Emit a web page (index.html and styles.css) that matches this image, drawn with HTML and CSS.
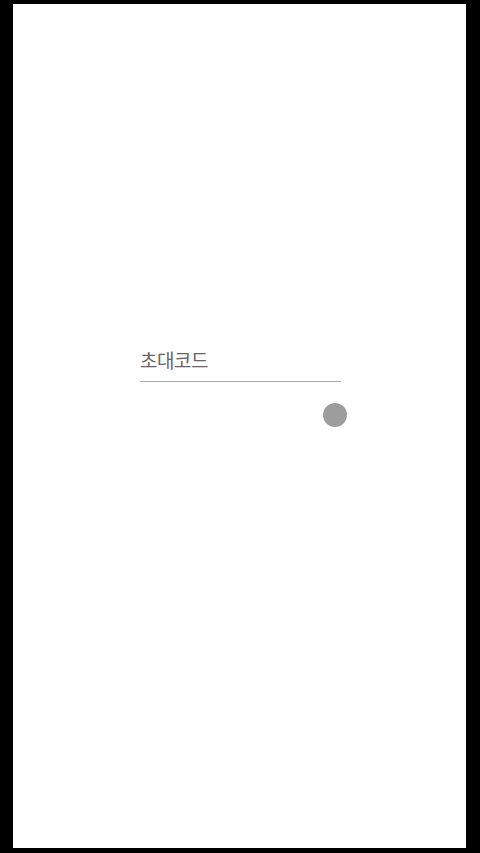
FILE: index.html
```html
<!DOCTYPE html>
<html>
<head>
    <link rel="stylesheet" href="styles.css">
</head>
<body>
    <div class="screen">
        <div class="invite-form">
            <div class="invite-field">
                <span class="invite-label">초대코드</span>
            </div>
            <div class="invite-actions">
                <span class="spinner-dot"></span>
            </div>
        </div>
    </div>
</body>
</html>
```
FILE: styles.css
```css
* {
    margin: 0;
    padding: 0;
    box-sizing: border-box;
}

html, body {
    height: 100%;
}

body {
    background: #000000;
    font-family: "Noto Sans CJK KR", "Noto Sans", sans-serif;
    padding: 4px 14px 5px 13px;
}

.screen {
    background: #ffffff;
    height: 844px;
    display: flex;
    flex-direction: column;
    padding-top: 340px;
    padding-left: 127px;
}

.invite-form {
    width: 201px;
    display: flex;
    flex-direction: column;
}

.invite-field {
    border-bottom: 1px solid #a8a8a8;
    padding-bottom: 5px;
}

.invite-label {
    font-size: 19px;
    line-height: 32px;
    color: #6a6468;
    letter-spacing: -0.5px;
}

.invite-actions {
    display: flex;
    justify-content: flex-end;
    margin-top: 21px;
    margin-right: -6px;
}

.spinner-dot {
    width: 24px;
    height: 24px;
    border-radius: 50%;
    background: #9d9d9d;
}
```
